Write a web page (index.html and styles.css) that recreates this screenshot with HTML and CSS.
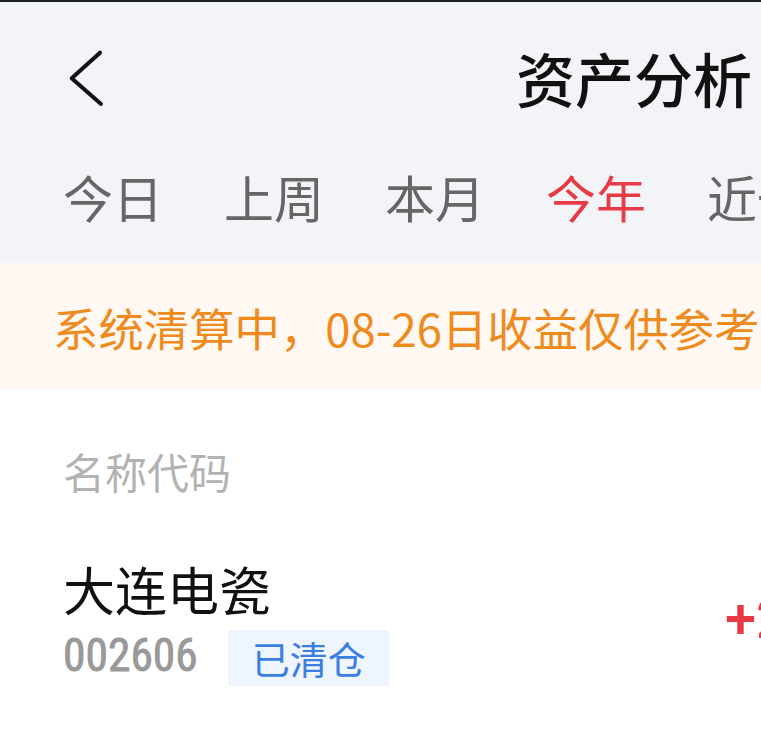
FILE: index.html
```html
<!DOCTYPE html>
<html lang="zh-CN">
<head>
<meta charset="utf-8">
<title>资产分析</title>
<link rel="stylesheet" href="styles.css">
</head>
<body>
<div class="page">
  <div class="status-line"></div>
  <header class="header">
    <div class="nav">
      <svg class="back" width="50" height="60" viewBox="0 0 50 60" aria-hidden="true">
        <polyline points="40,5.7 11.7,31.3 41,57" fill="none" stroke="#111" stroke-width="4" stroke-linecap="round" stroke-linejoin="round"/>
      </svg>
      <h1 class="title">资产分析</h1>
    </div>
    <nav class="tabs">
      <span class="tab">今日</span>
      <span class="tab">上周</span>
      <span class="tab">本月</span>
      <span class="tab tab-active">今年</span>
      <span class="tab">近一年</span>
    </nav>
  </header>
  <div class="notice">系统清算中，08-26日收益仅供参考</div>
  <section class="list">
    <div class="list-head">名称代码</div>
    <div class="row">
      <div class="stock">
        <div class="stock-name">大连电瓷</div>
        <div class="stock-meta">
          <span class="stock-code">002606</span>
          <span class="badge">已清仓</span>
        </div>
      </div>
      <div class="gain">+2,316.50</div>
    </div>
  </section>
</div>
</body>
</html>
```

FILE: styles.css
```css
* { box-sizing: border-box; }
html, body { margin: 0; padding: 0; }
body {
  width: 761px;
  height: 734px;
  overflow: hidden;
  background: #ffffff;
  font-family: "Noto Sans CJK SC", "Noto Sans", sans-serif;
}
.page { width: 761px; overflow: hidden; }
.status-line { height: 2px; background: #1f2329; }
.header { background: #f3f4f8; height: 261px; }
.nav {
  height: 150px;
  display: flex;
  align-items: center;
  padding-left: 60px;
}
.back { display: block; flex-shrink: 0; }
.title {
  margin: 0 0 0 406px;
  font-size: 59px;
  line-height: 59px;
  font-weight: 500;
  color: #111111;
  white-space: nowrap;
}
.tabs {
  display: flex;
  gap: 61px;
  padding: 19px 0 0 63px;
  white-space: nowrap;
}
.tab {
  font-size: 50px;
  line-height: 50px;
  color: #666666;
  flex-shrink: 0;
}
.tab-active { color: #e83a45; }
.notice {
  height: 127px;
  background: #fff8f3;
  display: flex;
  align-items: center;
  padding-left: 53px;
  font-size: 45.4px;
  color: #ef8a1c;
  white-space: nowrap;
}
.list { padding: 60px 0 0 63px; }
.list-head {
  font-size: 42px;
  line-height: 42px;
  color: #b3b3b3;
}
.row {
  display: grid;
  grid-template-columns: 662px auto;
  align-items: center;
  margin-top: 71px;
}
.stock-name {
  font-size: 52px;
  line-height: 52px;
  color: #111111;
}
.stock-meta {
  display: flex;
  align-items: center;
  margin-top: 15px;
}
.stock-code {
  font-family: "Liberation Sans Narrow", "Roboto Condensed", Roboto, sans-serif;
  font-size: 45.5px;
  font-weight: 400;
  color: #999999;
  margin-top: -6px;
  -webkit-text-stroke: 0.8px #999999;
}
.badge {
  margin-left: 30px;
  background: #eef5ff;
  color: #3a7fe0;
  font-size: 38px;
  line-height: 38px;
  padding: 9px 23px 9px 24px;
}
.gain {
  font-family: Roboto, sans-serif;
  font-size: 56px;
  font-weight: 500;
  color: #e83a45;
  white-space: nowrap;
  margin-top: -12px;
}
```
